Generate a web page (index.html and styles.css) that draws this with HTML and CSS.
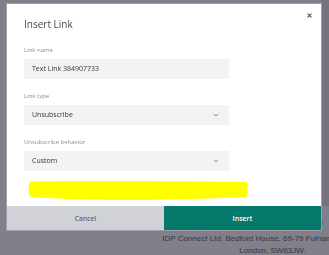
FILE: index.html
```html
<!DOCTYPE html>
<html>
<head>
<meta charset="utf-8">
<link rel="stylesheet" href="styles.css">
</head>
<body>
<div class="viewport">
<div class="page">
  <p class="links"><span class="link">Unsubscribe</span> | <span class="link">Privacy Policy</span></p>
  <p class="address">IDP Connect Ltd, Bedford House, 69-79 Fulham Palace Road,<br>London, SW63JW.</p>
</div>
</div>
<div class="modal">
  <button class="close" aria-label="Close">
    <svg width="5" height="5" viewBox="0 0 5 5"><path d="M0.6 0.6 L4.4 4.4 M4.4 0.6 L0.6 4.4" stroke="#4f4e5e" stroke-width="1.1" fill="none"/></svg>
  </button>
  <div class="modal-body">
    <h2 class="title">Insert Link</h2>
    <div class="field first">
      <label class="label">Link name</label>
      <div class="input">Text Link 384907733</div>
    </div>
    <div class="field">
      <label class="label">Link type</label>
      <div class="input"><span>Unsubscribe</span>
        <svg class="chev" width="6" height="4" viewBox="0 0 6 4"><path d="M0.6 0.8 L3 3 L5.4 0.8" stroke="#8a87a0" stroke-width="1" fill="none"/></svg>
      </div>
    </div>
    <div class="field">
      <label class="label">Unsubscribe behavior</label>
      <div class="input"><span>Custom</span>
        <svg class="chev" width="6" height="4" viewBox="0 0 6 4"><path d="M0.6 0.8 L3 3 L5.4 0.8" stroke="#8a87a0" stroke-width="1" fill="none"/></svg>
      </div>
    </div>
    <svg class="highlight" width="222" height="21" viewBox="0 0 222 21"><path d="M4 0.5 C60 -0.5 150 0 219 1 C221.5 1.5 221.5 15.5 219 16.5 C150 18 90 21.5 5 16 C0.5 15 0.5 2 4 0.5 Z" fill="#ffff00"/></svg>
  </div>
  <div class="actions">
    <button class="btn cancel">Cancel</button>
    <button class="btn insert">Insert</button>
  </div>
</div>
</body>
</html>
```
FILE: styles.css
```css
html, body {
  margin: 0;
  padding: 0;
}
body {
  width: 329px;
  height: 255px;
  overflow: hidden;
  background-color: #807f8a;
  background-image: linear-gradient(to right, #807f8a 322px, #74737f 322px);
  background-size: 329px 206px;
  background-repeat: no-repeat;
  font-family: "Open Sans", "Liberation Sans", sans-serif;
}
.viewport {
  width: 329px;
  height: 255px;
  overflow: hidden;
}
.page {
  width: 545px;
  padding-top: 217px;
  text-align: center;
  font-family: "Liberation Sans", Arial, sans-serif;
  font-size: 8px;
  line-height: 12px;
  color: #383744;
  white-space: nowrap;
}
.links {
  margin: 0 0 4px;
}
.link {
  color: #4b5ab0;
}
.address {
  margin: 0;
}
.modal {
  position: fixed;
  left: 7px;
  top: 4px;
  width: 314px;
  background: #ffffff;
  box-shadow: 0 0 0 1px rgba(255, 255, 255, 0.25);
}
.close {
  position: absolute;
  right: 9px;
  top: 9px;
  width: 5px;
  height: 5px;
  padding: 0;
  border: 0;
  background: none;
  display: block;
}
.close svg {
  display: block;
}
.modal-body {
  padding: 13px 17px 4px;
}
.title {
  margin: 0;
  font-size: 10px;
  line-height: 14px;
  font-weight: 400;
  color: #4a4959;
}
.field {
  margin-top: 13.5px;
}
.field.first {
  margin-top: 15px;
}
.label {
  display: block;
  font-size: 6px;
  line-height: 8px;
  color: #8b8a96;
  margin-bottom: 4.5px;
}
.input {
  width: 205px;
  height: 20px;
  box-sizing: border-box;
  padding: 0 10px 0 8px;
  background: #f3f3f4;
  display: flex;
  align-items: center;
  justify-content: space-between;
  font-size: 7px;
  color: #353443;
}
.chev {
  display: block;
}
.highlight {
  display: block;
  margin: 10.5px 0 0 3px;
}
.actions {
  display: grid;
  grid-template-columns: 1fr 1fr;
}
.btn {
  height: 24px;
  border: 0;
  margin: 0;
  padding: 0;
  font-family: "Open Sans", "Liberation Sans", sans-serif;
  font-size: 7px;
}
.cancel {
  background: #d1d1d8;
  color: #4a4958;
}
.insert {
  background: #05796b;
  color: #ffffff;
  font-weight: 600;
}
```
